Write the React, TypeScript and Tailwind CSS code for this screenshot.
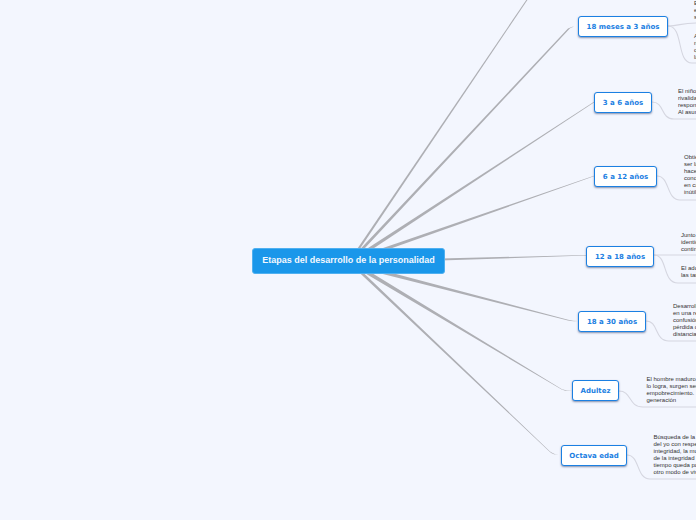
const topics = [
  { label: '18 meses a 3 años', left: 578, top: 16, w: 90, h: 21 },
  { label: '3 a 6 años', left: 594, top: 92, w: 58, h: 21 },
  { label: '6 a 12 años', left: 594, top: 166, w: 63, h: 21 },
  { label: '12 a 18 años', left: 586, top: 246, w: 68, h: 21 },
  { label: '18 a 30 años', left: 578, top: 311, w: 68, h: 21 },
  { label: 'Adultez', left: 572, top: 380, w: 47, h: 21 },
  { label: 'Octava edad', left: 561, top: 445, w: 66, h: 21 },
];

const leaves = [
  { left: 694, top: 0, lines: ['En esta', 'etapa', 'se'] },
  { left: 694, top: 33, lines: ['A', 'medida', 'que', 'la'] },
  { left: 678, top: 88, lines: ['El niño descubre', 'rivalidad con', 'responsabilidad', 'Al asumir nuevas'] },
  { left: 684, top: 154, lines: ['Obtiene', 'ser la', 'hacer', 'conocimientos', 'en cambio', 'inútil'] },
  { left: 681, top: 232, lines: ['Junto a la', 'identidad', 'continuidad'] },
  { left: 681, top: 265, lines: ['El adolescente', 'las tareas'] },
  { left: 673, top: 303, lines: ['Desarrollo de', 'en una relación', 'confusión de', 'pérdida de', 'distancia'] },
  { left: 646.5, top: 376, lines: ['El hombre maduro busca', 'lo logra, surgen sentimientos', 'empobrecimiento.', 'generación'] },
  { left: 653.5, top: 434, lines: ['Búsqueda de la', 'del yo con respecto', 'integridad, la muerte', 'de la integridad', 'tiempo queda para', 'otro modo de vivir'] },
];

// thick at the centre, thin at the far end
const branches = [
  'M349 261 L527.6 -2 L528.5 -1.6 L351 262 Z',
  'M349 261 L568 28.6 Q572 26.2 578 26.2 Q572 26.7 569.8 28.4 L351 263 Z',
  'M348 261 L594 101.8 L594 102.4 L350 264 Z',
  'M348 260 L594 175.7 L594 176.3 L350 263 Z',
  'M440 258.6 L586 254.9 L586 255.5 L440 260.6 Z',
  'M347 261 L568 319.7 Q573 321 578 321 Q572 321.5 568 320.5 L347 265 Z',
  'M349 259 L562 389.2 Q567 391 572 391 Q566 391.5 561.6 389.6 L346 262 Z',
  'M349 259 L550 451.4 Q555 455 561 455 Q554 455.5 549.6 451.8 L347 261 Z',
];

const leafLinks = [
  'M668 26 C680 26 680 23 696 23',
  'M668 26 C684 26 676 63 692 63 L696 63',
  'M652 102 C665 102 660 119 674 119 L696 119',
  'M657 176 C670 176 666 200 680 200 L696 200',
  'M654 255 L696 255',
  'M654 255 C668 255 662 283 678 283 L696 283',
  'M646 321 C659 321 654 341 669 341 L696 341',
  'M619 391 C632 391 628 407 643 407 L696 407',
  'M627 455 C640 455 636 479 650 479 L696 479',
];

function Links() {
  return (
    <svg className="absolute inset-0" width="696" height="520" viewBox="0 0 696 520" fill="none">
      {branches.map((d, i) => (
        <path key={i} d={d} fill="#aeafb4" />
      ))}
      {leafLinks.map((d, i) => (
        <path key={i} d={d} stroke="#d5d6e0" strokeWidth="1.1" />
      ))}
    </svg>
  );
}

export default function App() {
  return (
    <div className="relative w-[696px] h-[520px] overflow-hidden bg-[#f3f6fe]">
      <Links />

      <div className="absolute left-[252px] top-[248px] w-[193px] h-[26px] flex items-center justify-center rounded-[3px] bg-[#1a97ea] border border-[#4fb0f0] text-[#f3f8fe] text-[9px] font-bold whitespace-nowrap font-['Liberation_Sans',sans-serif]">
        Etapas del desarrollo de la personalidad
      </div>

      {topics.map(t => (
        <div
          key={t.label}
          className="absolute flex items-center justify-center pt-px rounded-[3px] bg-white border-[1.5px] border-[#1b80e2] shadow-[0_1px_2px_rgba(40,60,110,0.55)] text-[#1b80e2] text-[7px] font-bold whitespace-nowrap font-['DejaVu_Sans',sans-serif]"
          style={{ left: t.left, top: t.top, width: t.w, height: t.h }}
        >
          {t.label}
        </div>
      ))}

      {leaves.map((l, i) => (
        <div
          key={i}
          className="absolute text-[#333] text-[6px] leading-[7px] whitespace-nowrap font-['Liberation_Sans',sans-serif]"
          style={{ left: l.left, top: l.top }}
        >
          {l.lines.map(line => (
            <div key={line}>{line}</div>
          ))}
        </div>
      ))}
    </div>
  );
}
